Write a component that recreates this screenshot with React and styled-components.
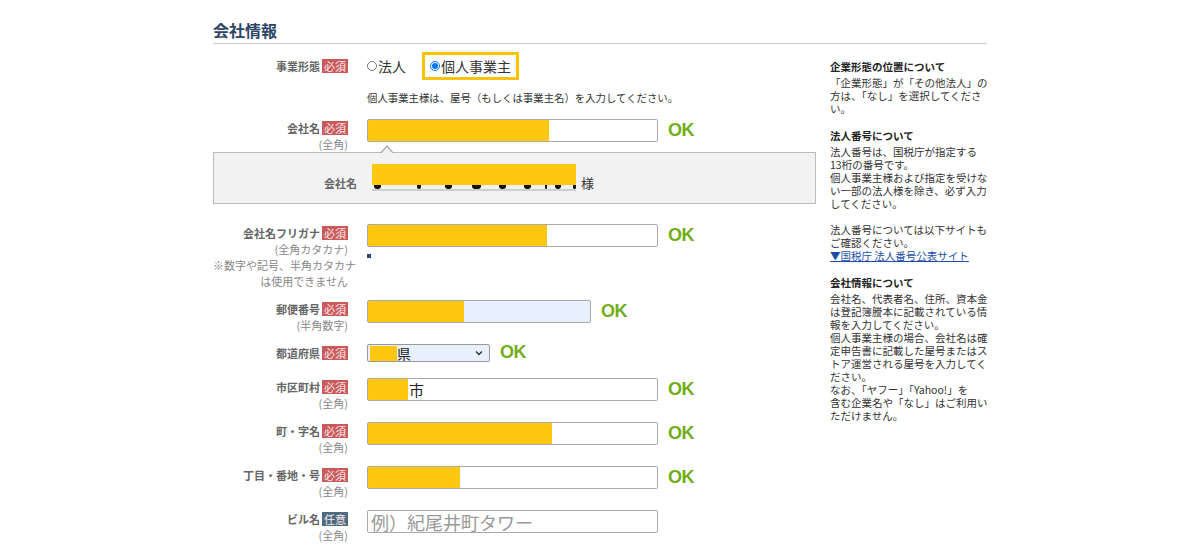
import styled, { createGlobalStyle } from "styled-components";

const GlobalStyle = createGlobalStyle`
  body {
    margin: 0;
    background: #fff;
    font-family: "Noto Sans CJK JP", "Noto Sans", sans-serif;
    color: #333;
  }
`;

const YELLOW = "#ffc70f";

const Page = styled.div`
  width: 774px;
  margin: 0 auto;
`;

const Heading = styled.h2`
  margin: 0;
  padding: 20px 0 3px;
  font-size: 16px;
  line-height: 20px;
  font-weight: bold;
  color: #2c4566;
  border-bottom: 1px solid #c8c8c8;
`;

const Columns = styled.div`
  display: flex;
  gap: 14px;
`;

const FormCol = styled.div`
  width: 603px;
  padding-top: 8px;
`;

const Row = styled.div`
  display: grid;
  grid-template-columns: 135px 1fr;
  column-gap: 19px;
  align-items: ${(p) => (p.$center ? "center" : "start")};
  margin-top: ${(p) => p.$top || 0}px;
  margin-bottom: ${(p) => (p.$bottom === undefined ? 11 : p.$bottom)}px;
`;

const LabelCell = styled.div`
  text-align: right;
  padding-top: ${(p) => (p.$center ? 0 : 1)}px;
  font-size: 11px;
  line-height: 16px;
  white-space: nowrap;
`;

const LabelText = styled.span`
  font-weight: bold;
  color: #666;
`;

const Badge = styled.span`
  display: inline-block;
  margin-left: 2px;
  padding: 0 2px;
  height: 14px;
  line-height: 14px;
  font-size: 11px;
  color: #fbeaea;
  background: ${(p) => (p.$optional ? "#4d6a80" : "#c9595b")};
  vertical-align: top;
  margin-top: 1px;
`;

const Sub = styled.span`
  display: block;
  color: #888;
`;

const Field = styled.div`
  display: flex;
  align-items: center;
  gap: 10px;
  height: ${(p) => p.$h || 23}px;
`;

const Stack = styled.div`
  display: flex;
  flex-direction: column;
`;

const TextInput = styled.input`
  box-sizing: border-box;
  width: ${(p) => p.$w}px;
  height: 23px;
  margin: 0;
  padding: 0 0 0 ${(p) => p.$indent || 3}px;
  border: 1px solid #aaa;
  border-radius: 2px;
  font-family: "Noto Sans CJK JP", sans-serif;
  font-size: ${(p) => p.$fs || 15}px;
  color: #222;
  outline: none;
  background: ${(p) =>
    p.$fill
      ? `linear-gradient(to right, ${YELLOW} 0 ${p.$fill}px, ${p.$bg || "#fff"} ${p.$fill}px)`
      : p.$bg || "#fff"};
  &::placeholder {
    color: #999;
  }
`;

const SelectBox = styled.div`
  box-sizing: border-box;
  width: 123px;
  height: 18px;
  align-self: flex-start;
  display: flex;
  align-items: center;
  padding: 0 6px 0 2px;
  border: 1px solid #999;
  border-radius: 2px;
  background: #e8f0fe;
  font-size: 14px;
  line-height: 16px;
  color: #222;
`;

const Fill = styled.span`
  display: block;
  width: ${(p) => p.$w}px;
  height: ${(p) => p.$h || 14}px;
  background: ${YELLOW};
`;

const Chevron = styled.svg`
  margin-left: auto;
`;

const Ok = styled.span`
  font-family: "Liberation Sans", Arial, sans-serif;
  font-weight: bold;
  font-size: 18px;
  letter-spacing: -0.5px;
  color: #71ad17;
`;

const Dot = styled.span`
  width: 4px;
  height: 4px;
  margin-top: 7px;
  background: #2b4a7c;
`;

const RadioGroup = styled.div`
  display: flex;
  align-items: center;
  height: 28px;
`;

const RadioLabel = styled.label`
  display: inline-flex;
  align-items: center;
  box-sizing: border-box;
  height: 28px;
  font-size: 14px;
  color: #333;
  ${(p) =>
    p.$marked &&
    `
    margin-left: 16px;
    padding: 0 5px;
    border: 3px solid #f9c300;
  `}
`;

const Radio = styled.input`
  width: 10px;
  height: 10px;
  margin: 0 1px 0 0;
`;

const Note = styled.p`
  margin: 0;
  font-size: 10.4px;
  line-height: 14px;
  color: #333;
  white-space: nowrap;
`;

const Popup = styled.div`
  position: relative;
  display: grid;
  grid-template-columns: 143px auto auto;
  justify-content: start;
  column-gap: 15px;
  padding: 11px 0 12px;
  background: #f2f2f2;
  border: 1px solid #bbb;
  &::before,
  &::after {
    content: "";
    position: absolute;
    left: 166px;
    border-left: 7px solid transparent;
    border-right: 7px solid transparent;
  }
  &::before {
    top: -8px;
    border-bottom: 8px solid #aaa;
  }
  &::after {
    top: -6px;
    left: 167px;
    border-left-width: 6px;
    border-right-width: 6px;
    border-bottom: 7px solid #f2f2f2;
  }
`;

const PopupLabel = styled.div`
  padding-top: 11px;
  text-align: right;
  font-size: 11px;
  line-height: 16px;
  font-weight: bold;
  color: #666;
`;

const NameBox = styled.div`
  width: 204px;
  display: flex;
  flex-direction: column;
`;

const Marks = styled.div`
  display: flex;
  height: 4px;
  padding-left: 2px;
`;

const Mark = styled.span`
  width: ${(p) => p.$w}px;
  margin-left: ${(p) => p.$gap}px;
  background: #111;
  border-radius: 0 0 3px 3px;
`;

const Underline = styled.div`
  height: 2px;
  background: #cfcfcf;
`;

const Sama = styled.span`
  padding-top: 11px;
  margin-left: -10px;
  font-size: 13px;
  line-height: 16px;
  color: #333;
`;

const Sidebar = styled.aside`
  width: 157px;
  padding-top: 16px;
  font-size: 10.5px;
  line-height: 13px;
  color: #333;
  white-space: nowrap;
`;

const Section = styled.section`
  margin-bottom: 14px;
`;

const SideTitle = styled.h3`
  margin: 0 0 2px;
  font-size: 10.5px;
  line-height: 14px;
  font-weight: bold;
  color: #222;
`;

const SideText = styled.p`
  margin: 0;
`;

const SideLink = styled.a`
  color: #1d4fa8;
  text-decoration: underline;
`;

const marks = [
  [10, 0],
  [6, 36],
  [10, 24],
  [12, 20],
  [10, 18],
  [10, 18],
  [3, 14],
  [8, 8],
  [5, 12],
];

const Label = ({ text, optional, subs = [], center }) => (
  <LabelCell $center={center}>
    <LabelText>{text}</LabelText>
    <Badge $optional={optional}>{optional ? "任意" : "必須"}</Badge>
    {subs.map((s) => (
      <Sub key={s}>{s}</Sub>
    ))}
  </LabelCell>
);

const App = () => {
  return (
    <Page>
      <GlobalStyle />
      <Heading>会社情報</Heading>
      <Columns>
        <FormCol>
          <Row $center $bottom={11}>
            <Label text="事業形態" center />
            <RadioGroup>
              <RadioLabel>
                <Radio type="radio" name="kind" />
                法人
              </RadioLabel>
              <RadioLabel $marked>
                <Radio type="radio" name="kind" defaultChecked />
                個人事業主
              </RadioLabel>
            </RadioGroup>
          </Row>
          <Row $bottom={14}>
            <div />
            <Note>個人事業主様は、屋号（もしくは事業主名）を入力してください。</Note>
          </Row>

          <Row $bottom={0}>
            <Label text="会社名" subs={["(全角)"]} />
            <Field>
              <TextInput $w={291} $fill={181} readOnly />
              <Ok>OK</Ok>
            </Field>
          </Row>
          <Popup>
            <PopupLabel>会社名</PopupLabel>
            <NameBox>
              <Fill $w={204} $h={21} />
              <Marks>
                {marks.map(([w, g], i) => (
                  <Mark key={i} $w={w} $gap={g} />
                ))}
              </Marks>
              <Underline />
            </NameBox>
            <Sama>様</Sama>
          </Popup>

          <Row $top={20}>
            <Label
              text="会社名フリガナ"
              subs={["(全角カタカナ)", "※数字や記号、半角カタカナ", "は使用できません"]}
            />
            <Stack>
              <Field>
                <TextInput $w={291} $fill={179} readOnly />
                <Ok>OK</Ok>
              </Field>
              <Dot />
            </Stack>
          </Row>

          <Row>
            <Label text="郵便番号" subs={["(半角数字)"]} />
            <Field>
              <TextInput $w={224} $fill={96} $bg="#e8f0fe" readOnly />
              <Ok>OK</Ok>
            </Field>
          </Row>

          <Row>
            <Label text="都道府県" />
            <Field $h={23}>
              <SelectBox>
                <Fill $w={27} $h={15} />
                <span>県</span>
                <Chevron width="8" height="6" viewBox="0 0 8 6">
                  <polyline points="1,1.5 4,4.5 7,1.5" fill="none" stroke="#333" strokeWidth="1.4" />
                </Chevron>
              </SelectBox>
              <Ok style={{ alignSelf: "flex-start", marginTop: -2 }}>OK</Ok>
            </Field>
          </Row>

          <Row>
            <Label text="市区町村" subs={["(全角)"]} />
            <Field>
              <TextInput $w={291} $fill={40} $indent={41} defaultValue="市" readOnly />
              <Ok>OK</Ok>
            </Field>
          </Row>

          <Row>
            <Label text="町・字名" subs={["(全角)"]} />
            <Field>
              <TextInput $w={291} $fill={184} readOnly />
              <Ok>OK</Ok>
            </Field>
          </Row>

          <Row>
            <Label text="丁目・番地・号" subs={["(全角)"]} />
            <Field>
              <TextInput $w={291} $fill={92} readOnly />
              <Ok>OK</Ok>
            </Field>
          </Row>

          <Row $bottom={0}>
            <Label text="ビル名" optional subs={["(全角)"]} />
            <Field>
              <TextInput $w={291} $fs={18} placeholder="例）紀尾井町タワー" />
            </Field>
          </Row>
        </FormCol>

        <Sidebar>
          <Section>
            <SideTitle>企業形態の位置について</SideTitle>
            <SideText>
              「企業形態」が「その他法人」の
              <br />
              方は、「なし」を選択してくださ
              <br />
              い。
            </SideText>
          </Section>
          <Section>
            <SideTitle>法人番号について</SideTitle>
            <SideText>
              法人番号は、国税庁が指定する
              <br />
              13桁の番号です。
              <br />
              個人事業主様および指定を受けな
              <br />
              い一部の法人様を除き、必ず入力
              <br />
              してください。
              <br />
              <br />
              法人番号については以下サイトも
              <br />
              ご確認ください。
              <br />
              <SideLink href="#">▼国税庁 法人番号公表サイト</SideLink>
            </SideText>
          </Section>
          <Section>
            <SideTitle>会社情報について</SideTitle>
            <SideText>
              会社名、代表者名、住所、資本金
              <br />
              は登記簿謄本に記載されている情
              <br />
              報を入力してください。
              <br />
              個人事業主様の場合、会社名は確
              <br />
              定申告書に記載した屋号またはス
              <br />
              トア運営される屋号を入力してく
              <br />
              ださい。
              <br />
              なお、「ヤフー」「Yahoo!」を
              <br />
              含む企業名や「なし」はご利用い
              <br />
              ただけません。
            </SideText>
          </Section>
        </Sidebar>
      </Columns>
    </Page>
  );
};

export default App;
